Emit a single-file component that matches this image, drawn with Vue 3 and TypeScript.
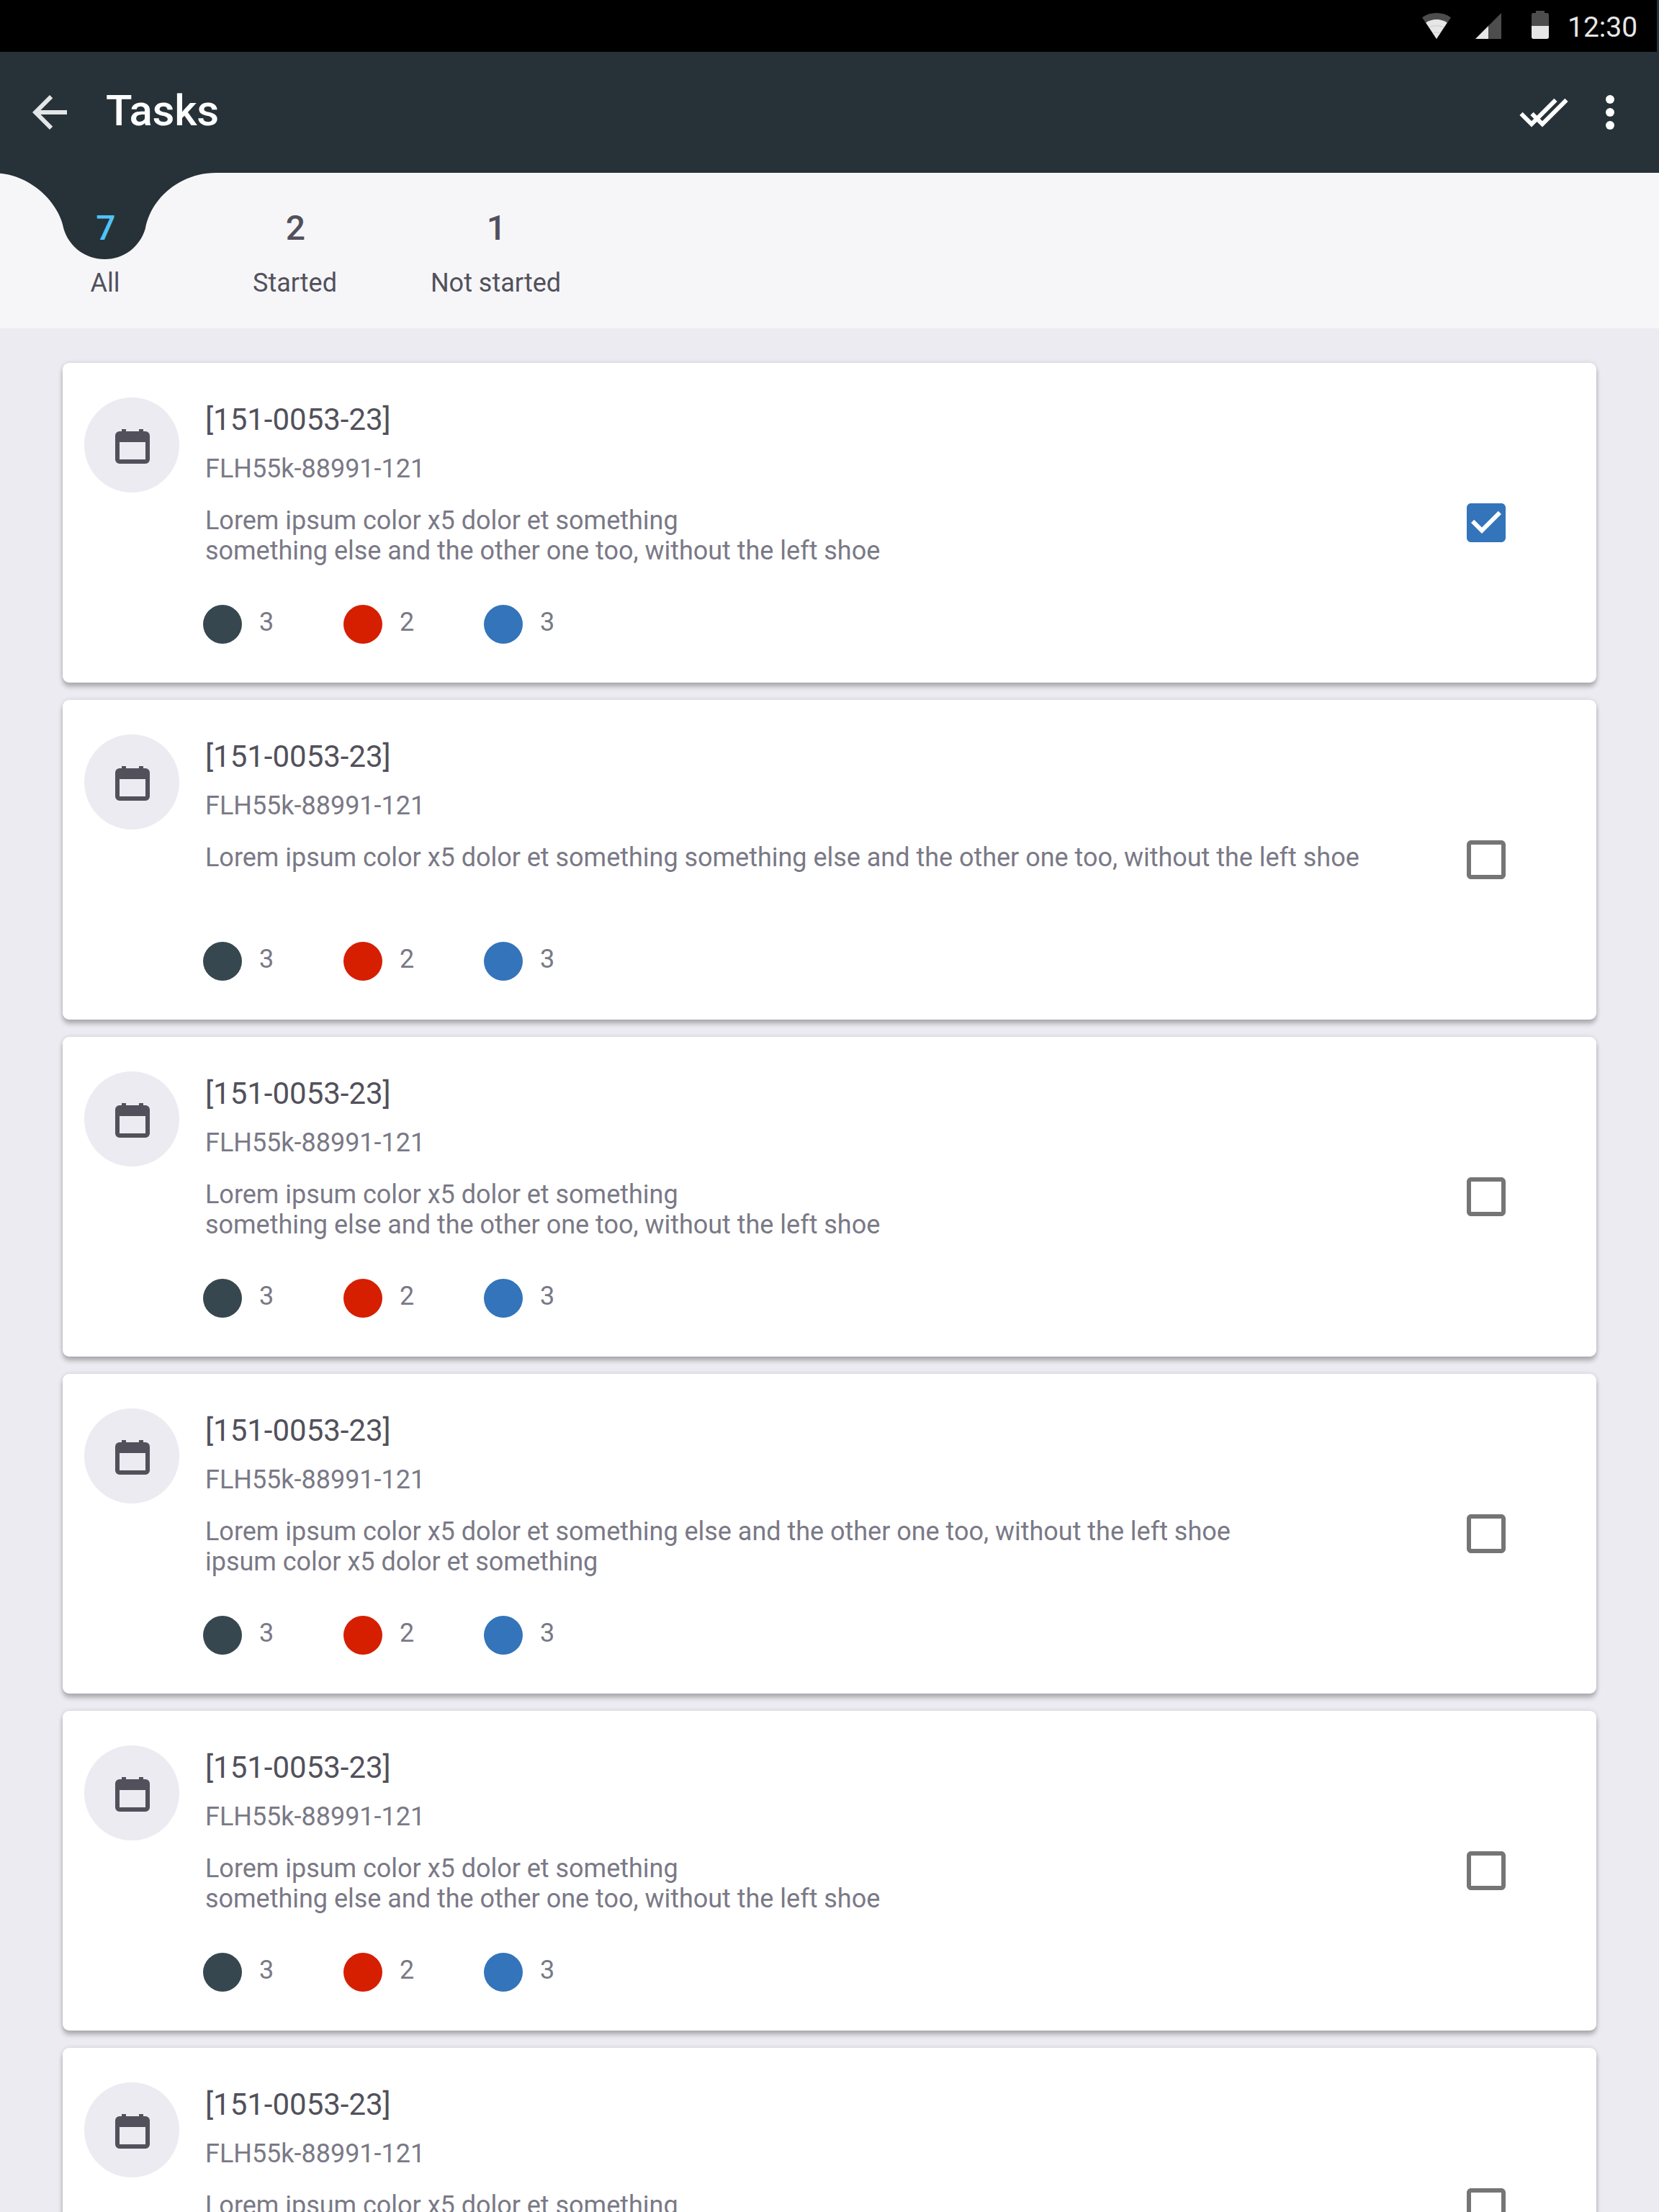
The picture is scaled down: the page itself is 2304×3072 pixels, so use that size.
<script setup lang="ts">
interface Tab { count: number; label: string; active?: boolean }
interface Task { lines: string[]; done: boolean }

const tabs: Tab[] = [
  { count: 7, label: 'All', active: true },
  { count: 2, label: 'Started' },
  { count: 1, label: 'Not started' },
]

const split = ['Lorem ipsum color x5 dolor et something', 'something else and the other one too, without the left shoe']

const tasks: Task[] = [
  { lines: split, done: true },
  { lines: ['Lorem ipsum color x5 dolor et something something else and the other one too, without the left shoe'], done: false },
  { lines: split, done: false },
  { lines: ['Lorem ipsum color x5 dolor et something else and the other one too, without the left shoe', 'ipsum color x5 dolor et something'], done: false },
  { lines: split, done: false },
  { lines: split, done: false },
]

const counters = [
  { tone: 'slate', value: 3 },
  { tone: 'red', value: 2 },
  { tone: 'blue', value: 3 },
]
</script>

<template>
  <div class="screen">
    <div class="status">
      <svg class="wifi" width="40" height="36" viewBox="0 0 40 36">
        <path d="M0 6.3C6 2 12.500 0 20 0s14 2 20 6.300L20 36z" fill="#4d4d4d" />
        <path d="M5.200 13.600C9.600 10.500 14.500 9 20 9s10.400 1.500 14.800 4.600L20 36z" fill="#e6e6e6" />
        <path d="M10.500 19.500c3-1.300 6-1.800 9.500-1.800s6.500.5 9.500 1.800M15.500 27.500c3-.9 6-.9 9 0" fill="none" stroke="#c4c4c4" stroke-width=".8" />
      </svg>
      <svg class="signal" width="36" height="36" viewBox="0 0 36 36">
        <path d="M36 0v36H18V18z" fill="#4d4d4d" />
        <path d="M18 18v18H0z" fill="#e6e6e6" />
      </svg>
      <svg class="battery" width="24" height="39" viewBox="0 0 24 39">
        <path d="M0 21V5.400A2.400 2.400 0 0 1 2.400 3H6V0h12v3h3.600A2.400 2.400 0 0 1 24 5.400V21z" fill="#4d4d4d" />
        <path d="M0 21h24v15.600a2.400 2.400 0 0 1-2.400 2.400H2.400A2.400 2.400 0 0 1 0 36.600z" fill="#e6e6e6" />
      </svg>
      <span class="clock">12:30</span>
    </div>

    <header class="appbar">
      <svg class="back" width="72" height="72" viewBox="0 0 24 24">
        <path d="M20 11H7.830l5.590-5.590L12 4l-8 8 8 8 1.410-1.410L7.830 13H20v-2z" fill="#e3e5e6" />
      </svg>
      <h1>Tasks</h1>
      <svg class="done-all" width="68" height="42" viewBox="0 -1 68 42">
        <path d="M2.500 21.800 17 36.300 50.500 2.800M17.500 21.800 32 36.300 65.500 2.800" fill="none" stroke="#fff" stroke-width="6" />
      </svg>
      <svg class="more" width="12" height="48" viewBox="0 0 12 48">
        <circle cx="6" cy="6" r="6" fill="#fff" /><circle cx="6" cy="24" r="6" fill="#fff" /><circle cx="6" cy="42" r="6" fill="#fff" />
      </svg>
    </header>

    <nav class="tabs">
      <svg class="drop" width="310" height="120" viewBox="0 0 310 120">
        <path d="M0 0V.8C45 5 82 42 88.500 78C96 103 119 120 145.500 120S194 103 201.700 78C210 33 252 0 300 0z" fill="#263238" />
      </svg>
      <div v-for="t in tabs" :key="t.label" class="tab" :class="{ active: t.active }">
        <span class="count">{{ t.count }}</span>
        <span class="label">{{ t.label }}</span>
      </div>
    </nav>

    <main class="list">
      <article v-for="(task, i) in tasks" :key="i" class="card">
        <div class="avatar">
          <svg width="48" height="48" viewBox="0 0 48 48">
            <path fill-rule="evenodd" d="M42 3h-3V0h-6v3H15V0H9v3H6a6 6 0 0 0-6 6v33a6 6 0 0 0 6 6h36a6 6 0 0 0 6-6V9a6 6 0 0 0-6-6zM6 18h36v24H6z" fill="#52515b" />
          </svg>
        </div>
        <div class="body">
          <h2>[151-0053-23]</h2>
          <p class="code">FLH55k-88991-121</p>
          <p class="text"><span v-for="line in task.lines" :key="line">{{ line }}</span></p>
          <div class="counters">
            <div v-for="(c, n) in counters" :key="n" class="counter">
              <i :class="c.tone"></i><span>{{ c.value }}</span>
            </div>
          </div>
        </div>
        <svg class="check" width="72" height="72" viewBox="0 0 24 24">
          <path v-if="task.done" fill="#3374ba" d="M19 3H5c-1.110 0-2 .9-2 2v14c0 1.100.89 2 2 2h14c1.110 0 2-.9 2-2V5c0-1.100-.89-2-2-2zm-9 14l-5-5 1.410-1.410L10 14.170l7.590-7.590L19 8l-9 9z" />
          <path v-else fill="#757575" d="M19 5v14H5V5h14m0-2H5c-1.100 0-2 .9-2 2v14c0 1.100.9 2 2 2h14c1.100 0 2-.9 2-2V5c0-1.100-.9-2-2-2z" />
        </svg>
      </article>
    </main>
  </div>
</template>

<style>
body { margin: 0; background: #ebebf1; }
</style>

<style scoped>
.screen { width: 2304px; height: 3072px; overflow: hidden; background: #ebebf1; font-family: Roboto, "Liberation Sans", sans-serif; color: #52515b; }
h1, h2, p { margin: 0; font-weight: 400; }
svg { display: block; flex: none; }

.status { display: flex; height: 72px; box-sizing: border-box; padding: 15px 27px 0 0; justify-content: flex-end; background: linear-gradient(to right, #000 2301px, #263238 2301px); }
.wifi { margin: 3px 34px 0 0; }
.signal { margin: 3px 42px 0 0; }
.battery { margin-right: 26px; }
.clock { width: 100px; font-size: 39px; line-height: 46px; color: #e6e6e6; white-space: nowrap; }

.appbar { display: flex; height: 168px; align-items: center; box-sizing: border-box; padding: 0 62px 0 33px; background: #263238; }
.back { flex: none; }
h1 { flex: 1; margin: -5px 0 0 42px; font-size: 60px; line-height: 72px; font-weight: 500; letter-spacing: -.25px; color: #fff; }
.done-all { margin-right: 52px; }

.tabs { position: relative; display: flex; height: 216px; background: #f6f6f9; }
.drop { position: absolute; left: 0; top: 0; }
.tab { position: relative; display: flex; flex-direction: column; align-items: center; padding-top: 49px; white-space: nowrap; }
.tab:nth-of-type(1) { width: 292px; }
.tab:nth-of-type(2) { width: 235px; }
.tab:nth-of-type(3) { width: 323px; }
.count { margin-left: 2px; font-size: 48px; line-height: 56px; font-weight: 500; }
.active .count { color: #4fc3f7; }
.label { margin-top: 27px; font-size: 36px; line-height: 42px; }

.list { display: flex; flex-direction: column; gap: 24px; padding: 48px 87px 0; }
.card { display: flex; flex: none; height: 444px; border-radius: 9px; background: #fff; box-shadow: 0 0 6px rgba(0, 0, 0, .12), 0 6px 6px rgba(0, 0, 0, .24); }
.avatar { display: flex; flex: none; box-sizing: border-box; width: 132px; height: 132px; margin: 48px 0 0 30px; padding: 44px 0 0 43px; border-radius: 50%; background: #ebebf1; }
.body { flex: 1; margin-left: 36px; padding-top: 54px; color: #7a7986; font-size: 36px; line-height: 42px; letter-spacing: -.02px; white-space: nowrap; }
h2 { font-size: 42px; line-height: 50px; color: #52515b; }
.code { margin-top: 22px; }
.text { height: 84px; margin-top: 30px; }
.text span { display: block; }
.counters { display: flex; margin: 54px 0 0 -3px; }
.counter { display: flex; width: 195px; align-items: flex-start; }
.counter i { width: 54px; height: 54px; margin-right: 24px; border-radius: 50%; }
.counter span { padding-top: 3px; }
.slate { background: #37474f; }
.red { background: #d51f00; }
.blue { background: #3374ba; }
.check { margin: 186px 117px 0 0; }
</style>
